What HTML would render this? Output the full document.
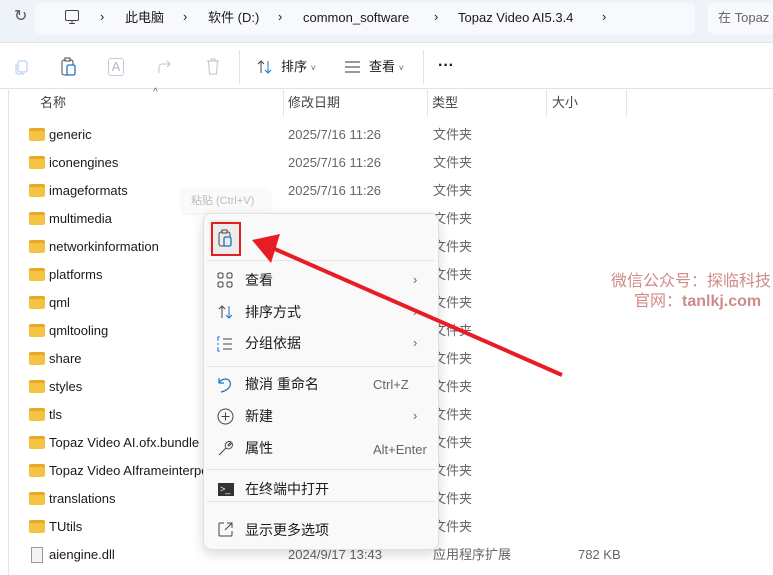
<!DOCTYPE html>
<html><head><meta charset="utf-8"><style>
*{margin:0;padding:0;box-sizing:border-box}
body{width:773px;height:575px;overflow:hidden;background:#fff;font-family:"Liberation Sans","Noto Sans CJK SC",sans-serif;font-size:13px;line-height:16px;color:#1a1a1a;position:relative}
.a{position:absolute;white-space:nowrap}
.top{left:0;top:0;width:773px;height:43px;background:#eef3f9;border-bottom:1px solid #dde3ea}
.addr{left:35px;top:3px;width:660px;height:31px;background:#f7f9fc;border-radius:5px}
.search{left:708px;top:3px;width:70px;height:31px;background:#f7f9fc;border-radius:5px}
.tb{top:43px;left:0;width:773px;height:46px;border-bottom:1px solid #e2e2e2}
.gray{color:#666}
.fold{width:16px;height:13px;background:#f5c342;border-radius:2px;border-top:3px solid #e8a824}
.menu{left:203px;top:213px;width:236px;height:337px;background:#f9f9f9;border:1px solid #e0e0e0;border-radius:8px;box-shadow:0 4px 12px rgba(0,0,0,.15)}
.sep{height:1px;background:#e3e3e3;width:228px;left:4px}
.mi{font-size:14px;line-height:16px}
</style></head><body>
<div class="a top"></div>
<div class="a addr"></div><div class="a search"></div>
<div class="a" style="left:14px;top:9px;font-size:16px;color:#555">↻</div>
<svg class="a" style="left:64px;top:9px" width="16" height="16"><rect x="1.5" y="1.5" width="13" height="10" rx="1.5" fill="none" stroke="#444"/><path d="M5 14.5h6M8 12v2" stroke="#444"/></svg>
<div class="a" style="left:100px;top:9px">›</div>
<div class="a" style="left:125px;top:10px">此电脑</div>
<div class="a" style="left:183px;top:9px">›</div>
<div class="a" style="left:208px;top:10px">软件 (D:)</div>
<div class="a" style="left:278px;top:9px">›</div>
<div class="a" style="left:303px;top:10px">common_software</div>
<div class="a" style="left:434px;top:9px">›</div>
<div class="a" style="left:458px;top:10px">Topaz Video AI5.3.4</div>
<div class="a" style="left:602px;top:9px">›</div>
<div class="a gray" style="left:718px;top:10px">在 Topaz</div>
<div class="a tb"></div>
<svg class="a" style="left:12px;top:58px" width="18" height="18"><rect x="6" y="3" width="9" height="11" rx="2" fill="none" stroke="#a8c8e8"/><path d="M4 6v8a2 2 0 0 0 2 2h6" fill="none" stroke="#a8c8e8"/></svg>
<svg class="a" style="left:60px;top:57px" width="18" height="20"><rect x="2" y="3" width="11" height="15" rx="2" fill="none" stroke="#444"/><rect x="5" y="1" width="5" height="3" fill="#fff" stroke="#444"/><rect x="7" y="8" width="8" height="10" rx="1.5" fill="#fff" stroke="#1a73c8" stroke-width="1.3"/></svg>
<div class="a" style="left:108px;top:58px;color:#b8b8c8;font-size:13px;border:1px solid #c8c8d8;border-radius:3px;width:16px;height:18px;text-align:center">A</div>
<svg class="a" style="left:156px;top:58px" width="18" height="18"><path d="M3 15V9a3 3 0 0 1 3-3h8M11 3l3 3-3 3" fill="none" stroke="#b8c4d8"/></svg>
<svg class="a" style="left:205px;top:57px" width="16" height="20"><path d="M2 4h12M6 4V2h4v2M3.5 4l1 13h7l1-13" fill="none" stroke="#c0c0c0"/></svg>
<div class="a" style="left:239px;top:50px;width:1px;height:34px;background:#e2e2e2"></div>
<svg class="a" style="left:256px;top:59px" width="18" height="16"><path d="M5 14V2M2 5l3-3 3 3" fill="none" stroke="#444"/><path d="M12 2v12M9 11l3 3 3-3" fill="none" stroke="#1a73c8"/></svg>
<div class="a" style="left:281px;top:59px">排序 <span class="gray" style="font-size:9px">˅</span></div>
<svg class="a" style="left:345px;top:60px" width="16" height="14"><path d="M0 2h15M0 7h15M0 12h15" stroke="#333"/></svg>
<div class="a" style="left:369px;top:59px">查看 <span class="gray" style="font-size:9px">˅</span></div>
<div class="a" style="left:423px;top:50px;width:1px;height:34px;background:#e2e2e2"></div>
<div class="a" style="left:438px;top:58px;font-size:16px;font-weight:bold">···</div>
<div class="a" style="left:8px;top:90px;width:1px;height:485px;background:#e5e5e5"></div>
<div class="a gray" style="left:40px;top:95px;color:#444">名称</div>
<div class="a gray" style="left:153px;top:85px;font-size:10px">^</div>
<div class="a" style="left:283px;top:90px;width:1px;height:27px;background:#e5e5e5"></div>
<div class="a" style="left:288px;top:95px;color:#444">修改日期</div>
<div class="a" style="left:427px;top:90px;width:1px;height:27px;background:#e5e5e5"></div>
<div class="a" style="left:432px;top:95px;color:#444">类型</div>
<div class="a" style="left:546px;top:90px;width:1px;height:27px;background:#e5e5e5"></div>
<div class="a" style="left:552px;top:95px;color:#444">大小</div>
<div class="a" style="left:626px;top:90px;width:1px;height:27px;background:#e5e5e5"></div>

<div id="rows"></div>
<script>
var n=["generic","iconengines","imageformats","multimedia","networkinformation","platforms","qml","qmltooling","share","styles","tls","Topaz Video AI.ofx.bundle","Topaz Video AIframeinterpolation","translations","TUtils"];
var h="";
n.forEach(function(s,i){var y=135+i*28;
h+='<div class="a fold" style="left:29px;top:'+(y-7)+'px"></div><div class="a" style="left:49px;top:'+(y-8)+'px">'+s+'</div>';
if(i<3)h+='<div class="a gray" style="left:288px;top:'+(y-8)+'px">2025/7/16 11:26</div>';
h+='<div class="a gray" style="left:433px;top:'+(y-8)+'px">文件夹</div>';});
h+='<div class="a" style="left:31px;top:547px;width:12px;height:16px;border:1px solid #999;background:#f4f4f4"></div><div class="a" style="left:49px;top:547px">aiengine.dll</div><div class="a gray" style="left:288px;top:547px">2024/9/17 13:43</div><div class="a gray" style="left:433px;top:547px">应用程序扩展</div><div class="a gray" style="left:578px;top:547px">782 KB</div>';
document.getElementById("rows").innerHTML=h;
</script>
<div class="a" style="left:182px;top:188px;width:88px;height:25px;background:#fafafa;border-radius:4px;box-shadow:0 1px 3px rgba(0,0,0,.08)"></div>
<div class="a" style="left:191px;top:193px;font-size:11px;color:#bbb">粘贴 (Ctrl+V)</div>
<div class="a menu"></div>
<div class="a" style="left:209px;top:220px;width:32px;height:34px;background:#ececec;border-radius:4px"></div>
<div class="a" style="left:211px;top:222px;width:30px;height:34px;border:2px solid #e02020"></div>
<svg class="a" style="left:217px;top:229px" width="18" height="20"><rect x="2" y="3" width="11" height="14" rx="2" fill="none" stroke="#444"/><rect x="5" y="1" width="5" height="3" fill="#ececec" stroke="#444"/><rect x="7" y="8" width="7" height="9" rx="1.5" fill="#ececec" stroke="#1a73c8" stroke-width="1.3"/></svg>
<div class="a sep" style="left:207px;top:260px"></div>
<svg class="a" style="left:217px;top:272px" width="16" height="16"><g fill="none" stroke="#444"><rect x="1" y="1" width="5" height="5" rx="1.5"/><rect x="10" y="1" width="5" height="5" rx="1.5"/><rect x="1" y="10" width="5" height="5" rx="1.5"/><rect x="10" y="10" width="5" height="5" rx="1.5"/></g></svg>
<div class="a mi" style="left:245px;top:272px">查看</div><div class="a gray" style="left:413px;top:272px">›</div>
<svg class="a" style="left:217px;top:304px" width="18" height="16"><path d="M5 14V2M2 5l3-3 3 3" fill="none" stroke="#444"/><path d="M12 2v12M9 11l3 3 3-3" fill="none" stroke="#1a73c8"/></svg>
<div class="a mi" style="left:245px;top:304px">排序方式</div><div class="a gray" style="left:413px;top:304px">›</div>
<svg class="a" style="left:217px;top:336px" width="16" height="16"><path d="M3 1H1v4M1 7v2M1 11v4h2" fill="none" stroke="#1a73c8"/><path d="M6 3h9M6 8h9M6 13h9" stroke="#444"/></svg>
<div class="a mi" style="left:245px;top:335px">分组依据</div><div class="a gray" style="left:413px;top:335px">›</div>
<div class="a sep" style="left:207px;top:366px"></div>
<svg class="a" style="left:217px;top:376px" width="16" height="17"><path d="M2 2v5h5M2 7c2-4 9-6 11-1s-4 9-9 10" fill="none" stroke="#1a73c8" stroke-width="1.2"/></svg>
<div class="a mi" style="left:245px;top:376px">撤消 重命名</div><div class="a gray" style="left:373px;top:377px">Ctrl+Z</div>
<svg class="a" style="left:217px;top:408px" width="17" height="17"><circle cx="8.5" cy="8.5" r="7.5" fill="none" stroke="#444"/><path d="M8.5 4.5v8M4.5 8.5h8" stroke="#444"/></svg>
<div class="a mi" style="left:245px;top:408px">新建</div><div class="a gray" style="left:413px;top:408px">›</div>
<svg class="a" style="left:217px;top:440px" width="17" height="17"><path d="M2 15l7-7a4 4 0 0 1 5-6l-3 3 1 1 3-3a4 4 0 0 1-6 5l-7 7z" fill="none" stroke="#444"/></svg>
<div class="a mi" style="left:245px;top:440px">属性</div><div class="a gray" style="left:373px;top:442px">Alt+Enter</div>
<div class="a sep" style="left:207px;top:469px"></div>
<div class="a" style="left:218px;top:483px;width:16px;height:13px;background:#333"><span style="position:absolute;left:2px;top:-2px;color:#fff;font-size:9px">&gt;_</span></div>
<div class="a mi" style="left:245px;top:481px">在终端中打开</div>
<div class="a sep" style="left:207px;top:501px"></div>
<svg class="a" style="left:217px;top:521px" width="17" height="17"><path d="M7 2H3a1 1 0 0 0-1 1v11a1 1 0 0 0 1 1h11a1 1 0 0 0 1-1v-4M10 2h5v5M15 2l-7 7" fill="none" stroke="#444"/></svg>
<div class="a mi" style="left:245px;top:522px">显示更多选项</div>
<svg class="a" style="left:0;top:0" width="773" height="575"><line x1="562" y1="375" x2="268" y2="246" stroke="#e81c24" stroke-width="4"/><polygon points="252,240 280,234 271,263" fill="#e81c24"/></svg>
<div class="a" style="left:611px;top:273px;font-size:16px;line-height:18px;color:#d08a8a">微信公众号：探临科技</div>
<div class="a" style="left:634px;top:293px;font-size:16px;line-height:18px;color:#d08a8a">官网：<b>tanlkj.com</b></div>
</body></html>
